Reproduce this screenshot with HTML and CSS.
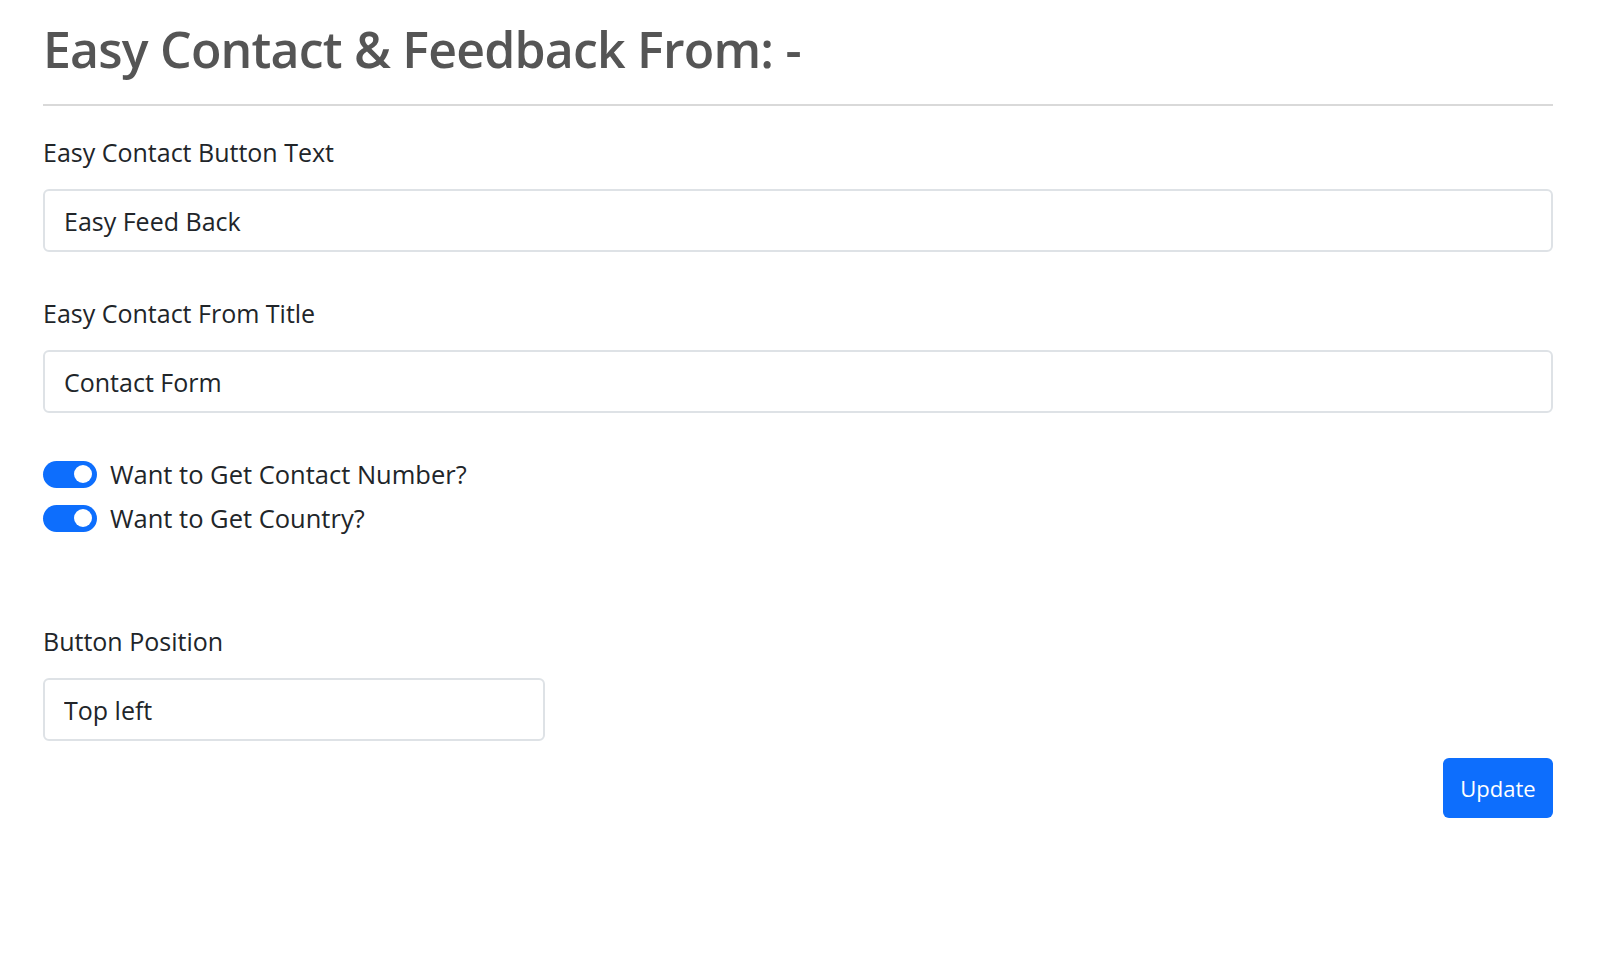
FILE: index.html
```html
<!DOCTYPE html>
<html lang="en">
<head>
<meta charset="utf-8">
<title>Easy Contact &amp; Feedback</title>
<link rel="stylesheet" href="styles.css">
</head>
<body>
<div class="page">
  <h2 class="title">Easy Contact &amp; Feedback From: -</h2>
  <hr class="rule">
  <form class="form">
    <div class="field field-first">
      <label class="label">Easy Contact Button Text</label>
      <input class="input" type="text" value="Easy Feed Back">
    </div>
    <div class="field">
      <label class="label">Easy Contact From Title</label>
      <input class="input" type="text" value="Contact Form">
    </div>
    <div class="switches">
      <label class="switch-row"><span class="switch"><span class="knob"></span></span><span>Want to Get Contact Number?</span></label>
      <label class="switch-row"><span class="switch"><span class="knob"></span></span><span>Want to Get Country?</span></label>
    </div>
    <div class="field field-pos">
      <label class="label">Button Position</label>
      <input class="input input-small" type="text" value="Top left">
    </div>
    <div class="actions">
      <button class="btn" type="button">Update</button>
    </div>
  </form>
</div>
</body>
</html>
```
FILE: styles.css
```css
html, body {
  margin: 0;
  padding: 0;
  background: #fff;
}
body {
  font-family: "Open Sans", "Noto Sans", sans-serif;
  color: #212529;
}
.page {
  padding: 14px 47px 0 43px;
}
.title {
  margin: 0;
  font-size: 50px;
  font-weight: 600;
  line-height: 70px;
  color: #555;
  letter-spacing: -0.8px;
}
.rule {
  margin: 20px 0 0 0;
  border: 0;
  border-top: 2px solid #d9d9d9;
}
.form {
  display: flex;
  flex-direction: column;
}
.field {
  display: flex;
  flex-direction: column;
  margin-top: 43px;
}
.field-first {
  margin-top: 28px;
}
.label {
  font-size: 25px;
  line-height: 36px;
  margin-bottom: 19px;
}
.input {
  box-sizing: border-box;
  height: 63px;
  border: 2px solid #dee2e6;
  border-radius: 6px;
  padding: 0 19px;
  font-family: inherit;
  font-size: 25px;
  color: #212529;
  background: #fff;
  outline: none;
}
.input-small {
  width: 502px;
}
.switches {
  display: flex;
  flex-direction: column;
  gap: 8px;
  margin-top: 43px;
}
.switch-row {
  display: flex;
  align-items: center;
  gap: 13px;
  font-size: 25.5px;
  line-height: 36px;
}
.switch {
  box-sizing: border-box;
  width: 54px;
  height: 27px;
  border-radius: 14px;
  background: #0d6efd;
  display: flex;
  align-items: center;
  justify-content: flex-end;
  padding-right: 5px;
}
.knob {
  width: 18px;
  height: 18px;
  border-radius: 50%;
  background: #fff;
}
.field-pos {
  margin-top: 87px;
}
.actions {
  display: flex;
  justify-content: flex-end;
  margin-top: 17px;
}
.btn {
  width: 110px;
  height: 60px;
  border: 0;
  border-radius: 6px;
  background: #0d6efd;
  color: #fff;
  font-family: inherit;
  font-size: 22px;
}
```
